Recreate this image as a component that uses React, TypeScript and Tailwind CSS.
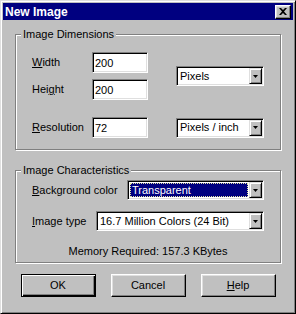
import React from "react";

const sunken =
  "border border-t-[#808080] border-l-[#808080] border-r-white border-b-white shadow-[inset_1px_1px_0_#000,inset_-1px_-1px_0_#dfdfdf]";
const raised =
  "border border-t-white border-l-white border-r-black border-b-black shadow-[inset_-1px_-1px_0_#808080,inset_1px_1px_0_#dfdfdf]";
const etched = "border border-[#808080] shadow-[inset_1px_1px_0_#fff,1px_1px_0_#fff]";

function ArrowButton() {
  return (
    <div
      className={`w-[13px] h-full shrink-0 bg-[#c0c0c0] flex items-center justify-center border border-t-[#dfdfdf] border-l-[#dfdfdf] border-r-black border-b-black shadow-[inset_1px_1px_0_#fff,inset_-1px_-1px_0_#808080]`}
    >
      <svg width="5" height="3" viewBox="0 0 5 3">
        <path d="M0 0h5L2.5 3z" fill="#000" />
      </svg>
    </div>
  );
}

function Select({ value, width, selected }: { value: string; width: string; selected?: boolean }) {
  return (
    <div className={`${width} h-[20px] bg-white ${sunken} p-[1px] flex`}>
      {selected ? (
        <div className="flex-1 m-[1px] bg-[#000080] text-white border border-dotted border-[#e0e0a0] flex items-center pl-[1px]">
          {value}
        </div>
      ) : (
        <div className="flex-1 flex items-center pl-[2px]">{value}</div>
      )}
      <ArrowButton />
    </div>
  );
}

function Field({ value }: { value: string }) {
  return (
    <input
      readOnly
      defaultValue={value}
      className={`w-[56px] h-[21px] bg-white ${sunken} px-[2px] text-[11px] text-black outline-none`}
    />
  );
}

function Group({ title, children, className = "" }: { title: string; children: React.ReactNode; className?: string }) {
  return (
    <fieldset className={`${etched} ${className}`}>
      <legend className="ml-[5px] px-[2px] bg-[#c0c0c0] leading-[13px]">{title}</legend>
      {children}
    </fieldset>
  );
}

function Button({ label, mnemonic, isDefault }: { label: string; mnemonic?: boolean; isDefault?: boolean }) {
  const cls = isDefault
    ? "border border-black shadow-[inset_1px_1px_0_#fff,inset_-1px_-1px_0_#000,inset_-2px_-2px_0_#808080]"
    : raised;
  return (
    <button className={`w-[75px] h-[23px] bg-[#c0c0c0] ${cls} flex items-center justify-center text-black`}>
      {mnemonic ? (
        <span>
          <u>{label[0]}</u>
          {label.slice(1)}
        </span>
      ) : (
        label
      )}
    </button>
  );
}

export default function App() {
  return (
    <div className="w-[296px] h-[314px] bg-[#c0c0c0] border border-t-[#dfdfdf] border-l-[#dfdfdf] border-r-black border-b-black shadow-[inset_1px_1px_0_#fff,inset_-1px_-1px_0_#808080] p-[2px] flex flex-col font-['Liberation_Sans',Arial,sans-serif] text-[11px] text-black">
      <div className="h-[17px] bg-[#000080] flex items-center justify-between pl-[2px] pr-[2px]">
        <span className="text-white font-bold text-[12px]">New Image</span>
        <div className={`w-[16px] h-[14px] bg-[#c0c0c0] ${raised} flex items-center justify-center`}>
          <svg width="8" height="7" viewBox="0 0 8 7">
            <path d="M0 0h2l2 2 2-2h2L5 3.5 8 7H6L4 5 2 7H0l3-3.5z" fill="#000" />
          </svg>
        </div>
      </div>

      <div className="px-[12px] flex flex-col">
        <Group title="Image Dimensions" className="mt-[8px]">
          <div className="pl-[16px] pt-[11px] pb-[11px]">
            <div className="flex items-center">
              <div className="flex flex-col gap-[6px]">
                <div className="flex items-center">
                  <span className="w-[60px]">
                    <u>W</u>idth
                  </span>
                  <Field value="200" />
                </div>
                <div className="flex items-center">
                  <span className="w-[60px]">
                    Hei<u>g</u>ht
                  </span>
                  <Field value="200" />
                </div>
              </div>
              <div className="ml-[28px]">
                <Select value="Pixels" width="w-[88px]" />
              </div>
            </div>
            <div className="flex items-center mt-[17px]">
              <span className="w-[60px]">
                <u>R</u>esolution
              </span>
              <Field value="72" />
              <div className="ml-[28px]">
                <Select value="Pixels / inch" width="w-[88px]" />
              </div>
            </div>
          </div>
        </Group>

        <Group title="Image Characteristics" className="mt-[14px]">
          <div className="pl-[16px] pt-[3px]">
            <div className="flex items-center">
              <span className="w-[95px]">
                <u>B</u>ackground color
              </span>
              <Select value="Transparent" width="w-[137px]" selected />
            </div>
            <div className="flex items-center mt-[11px]">
              <span className="w-[64px]">
                <u>I</u>mage type
              </span>
              <Select value="16.7 Million Colors (24 Bit)" width="w-[168px]" />
            </div>
          </div>
          <div className="text-center leading-[13px] mt-[14px] mb-[4px]">Memory Required: 157.3 KBytes</div>
        </Group>

        <div className="flex justify-center gap-[15px] mt-[11px]">
          <Button label="OK" isDefault />
          <Button label="Cancel" />
          <Button label="Help" mnemonic />
        </div>
      </div>
    </div>
  );
}
